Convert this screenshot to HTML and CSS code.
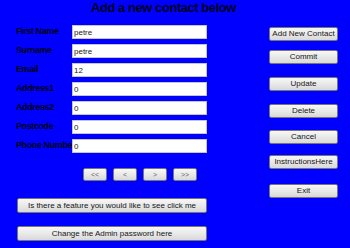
FILE: index.html
```html
<!DOCTYPE html>
<html>
<head>
<meta charset="utf-8">
<link rel="stylesheet" href="styles.css">
</head>
<body>
<h1 class="title">Add a new contact below</h1>
<div class="main">
  <div class="left">
    <div class="fields">
      <label class="label">First Name</label><input class="box" value="petre">
      <label class="label">Surname</label><input class="box" value="petre">
      <label class="label">Email</label><input class="box" value="12">
      <label class="label">Address1</label><input class="box" value="0">
      <label class="label">Address2</label><input class="box" value="0">
      <label class="label">Postcode</label><input class="box" value="0">
      <label class="label">Phone Number</label><input class="box" value="0">
    </div>
    <div class="nav">
      <button class="btn nbtn">&lt;&lt;</button>
      <button class="btn nbtn">&lt;</button>
      <button class="btn nbtn">&gt;</button>
      <button class="btn nbtn">&gt;&gt;</button>
    </div>
    <button class="btn wide feature">Is there a feature you would like to see click me</button>
    <button class="btn wide admin">Change the Admin password here</button>
  </div>
  <div class="right">
    <button class="btn side b-add">Add New Contact</button>
    <button class="btn side b-commit">Commit</button>
    <button class="btn side b-update">Update</button>
    <button class="btn side b-delete">Delete</button>
    <button class="btn side b-cancel">Cancel</button>
    <button class="btn side b-instr">InstructionsHere</button>
    <button class="btn side b-exit">Exit</button>
  </div>
</div>
</body>
</html>
```
FILE: styles.css
```css
html, body {
  margin: 0;
  padding: 0;
}
body {
  width: 350px;
  height: 248px;
  overflow: hidden;
  background: #0000ff;
  font-family: "Liberation Sans", Arial, sans-serif;
}
.title {
  margin: 0;
  height: 25px;
  padding-left: 91px;
  font-size: 13px;
  line-height: 15px;
  font-weight: bold;
  letter-spacing: -0.45px;
  color: #000018;
  white-space: nowrap;
}
.main {
  display: flex;
}
.left {
  width: 253px;
  padding-left: 16px;
  display: flex;
  flex-direction: column;
  align-items: flex-start;
}
.fields {
  display: grid;
  grid-template-columns: 56px 135px;
  row-gap: 5px;
}
.label {
  font-size: 9px;
  font-weight: bold;
  line-height: 12px;
  height: 14px;
  letter-spacing: -0.4px;
  color: #000010;
  white-space: nowrap;
}
.box {
  box-sizing: border-box;
  width: 135px;
  height: 14px;
  margin: 0;
  padding: 0 0 0 1px;
  border: 1px solid #c4c4d4;
  background: #fff;
  font-family: "Liberation Sans", Arial, sans-serif;
  font-size: 8px;
  color: #222;
  outline: none;
}
.btn {
  box-sizing: border-box;
  margin: 0;
  padding: 0;
  border: 1px solid #767676;
  border-radius: 2px;
  background: linear-gradient(#f7f7f7, #e9e9e9 50%, #d8d8d8);
  font-family: "Liberation Sans", Arial, sans-serif;
  font-size: 8px;
  line-height: 12px;
  color: #151515;
  white-space: nowrap;
}
.nav {
  display: flex;
  gap: 6px;
  margin: 15px 0 0 67px;
}
.nbtn {
  width: 24px;
  height: 13px;
  color: #666;
  font-size: 7px;
}
.wide {
  width: 190px;
  height: 15px;
  margin-left: 1px;
}
.feature {
  margin-top: 17px;
}
.admin {
  margin-top: 13px;
}
.right {
  display: flex;
  flex-direction: column;
  padding-top: 2px;
}
.side {
  width: 69px;
  height: 14px;
}
.b-commit { margin-top: 9px; }
.b-update { margin-top: 13px; }
.b-delete { margin-top: 13px; }
.b-cancel { margin-top: 12px; }
.b-instr { margin-top: 11px; }
.b-exit { margin-top: 15px; }
```
